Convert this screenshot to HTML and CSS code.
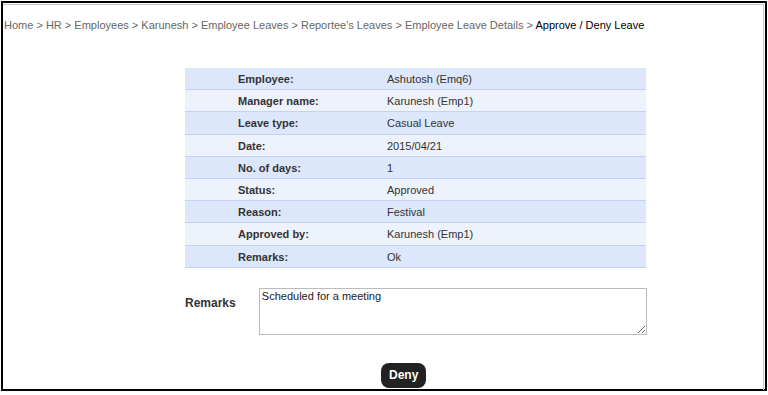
FILE: index.html
```html
<!DOCTYPE html>
<html>
<head>
    <title>Approve / Deny Leave</title>
    <link rel="stylesheet" href="styles.css">
</head>
    <body>
        <div class="frame">
            <div class="page">
                <div class="breadcrumb">
                    <a href="#">Home</a> &gt; <a href="#">HR</a> &gt; <a href="#">Employees</a> &gt; <a href="#">Karunesh</a> &gt; <a href="#">Employee Leaves</a> &gt; <a href="#">Reportee's Leaves</a> &gt; <a href="#">Employee Leave Details</a> &gt; <span class="current">Approve / Deny Leave</span>
                </div>

                <div class="content">
                    <table class="details">
                        <tr><th>Employee:</th><td>Ashutosh (Emq6)</td></tr>
                        <tr><th>Manager name:</th><td>Karunesh (Emp1)</td></tr>
                        <tr><th>Leave type:</th><td>Casual Leave</td></tr>
                        <tr><th>Date:</th><td>2015/04/21</td></tr>
                        <tr><th>No. of days:</th><td>1</td></tr>
                        <tr><th>Status:</th><td>Approved</td></tr>
                        <tr><th>Reason:</th><td>Festival</td></tr>
                        <tr><th>Approved by:</th><td>Karunesh (Emp1)</td></tr>
                        <tr><th>Remarks:</th><td>Ok</td></tr>
                    </table>

                    <form class="remarks-form">
                        <div class="remarks-row">
                            <label for="remarks">Remarks</label>
                            <textarea id="remarks" name="remarks">Scheduled for a meeting</textarea>
                        </div>
                        <div class="actions">
                            <button type="button" class="deny">Deny</button>
                        </div>
                    </form>
                </div>
            </div>
        </div>
    </body>
</html>
```

FILE: styles.css
```css
body {
    margin: 0;
    font-family: "Liberation Sans", Arial, sans-serif;
    font-size: 11px;
    color: #333;
}
.frame {
    box-sizing: border-box;
    margin: 1px;
    height: 390px;
    border: 2px solid #000;
}
.page {
    box-sizing: border-box;
    height: 100%;
    margin-top: 1px;
    margin-right: 1px;
    border-top: 1px solid #c8c8c8;
    border-right: 1px solid #c8c8c8;
}
.breadcrumb {
    padding: 12px 0 0 1px;
    height: 27px;
    line-height: 16px;
    color: #666;
    white-space: nowrap;
}
.breadcrumb a {
    color: #666;
    text-decoration: none;
}
.breadcrumb .current {
    color: #000;
}
.content {
    width: 462px;
    margin: 24px 0 0 182px;
}
.details {
    width: 461px;
    border-collapse: collapse;
}
.details th,
.details td {
    padding: 4px 0 2px;
    line-height: 15.2px;
    text-align: left;
    border-bottom: 1px solid #c3d4f2;
}
.details th {
    width: 149px;
    padding-left: 53px;
    color: #333;
}
.details td {
    color: #333;
}
.details tr:nth-child(odd) {
    background-color: #dce7fb;
}
.details tr:nth-child(even) {
    background-color: #edf2fc;
}
.remarks-form {
    margin-top: 20px;
}
.remarks-row {
    display: flex;
    align-items: flex-start;
}
.remarks-row label {
    width: 74px;
    padding-top: 8px;
    font-size: 12px;
    font-weight: bold;
    color: #333;
}
.remarks-row textarea {
    box-sizing: border-box;
    width: 389px;
    height: 47px;
    margin: 0;
    padding: 1px 2px;
    font-family: "Liberation Sans", Arial, sans-serif;
    font-size: 11px;
    color: #222;
    border: 1px solid #bbb;
}
.actions {
    margin-top: 28px;
    padding-left: 196px;
}
.deny {
    height: 25px;
    padding: 0 8px;
    font-family: "Liberation Sans", Arial, sans-serif;
    font-size: 12px;
    font-weight: bold;
    color: #fff;
    background-color: #222;
    border: none;
    border-radius: 8px;
    cursor: pointer;
}
```
